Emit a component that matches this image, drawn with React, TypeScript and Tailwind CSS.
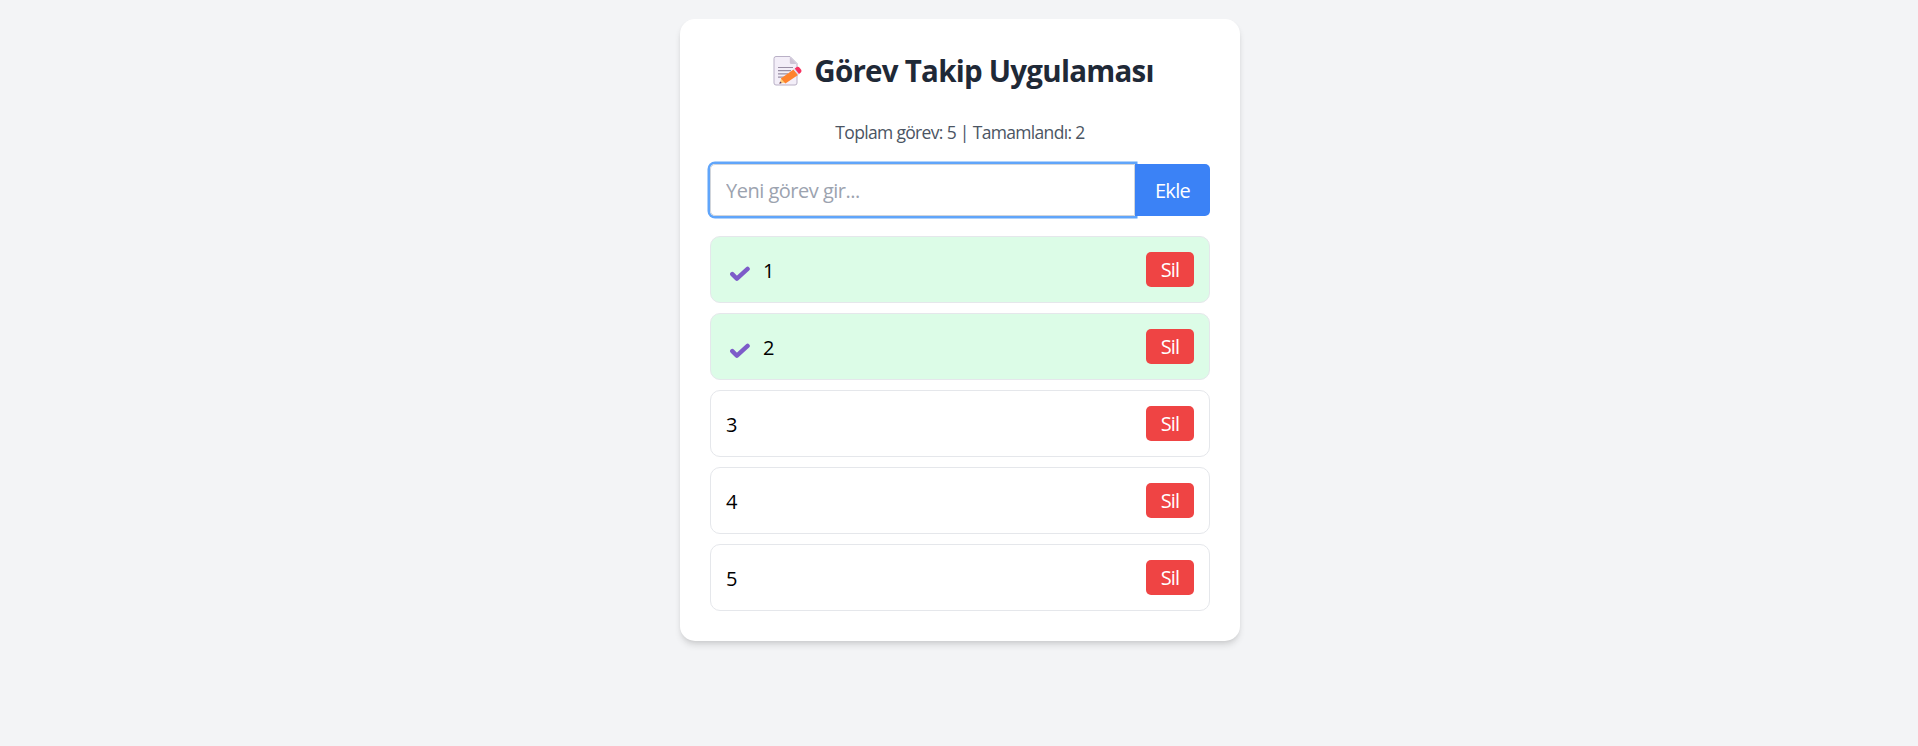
import { useState } from "react";

type Task = { id: number; text: string; done: boolean };

const initialTasks: Task[] = [
  { id: 1, text: "1", done: true },
  { id: 2, text: "2", done: true },
  { id: 3, text: "3", done: false },
  { id: 4, text: "4", done: false },
  { id: 5, text: "5", done: false },
];

function MemoIcon() {
  return (
    <svg viewBox="0 0 30 32" className="ml-[7px] h-8 w-[30px] shrink-0" aria-hidden="true">
      <path d="M3 1.500h14l7 7v19.500a2 2 0 0 1-2 2H3a2 2 0 0 1-2-2V3.500a2 2 0 0 1 2-2z" fill="#f3eef8" stroke="#b9b0c6" strokeWidth="1" />
      <path d="M16.800 2l6.800 7h-5.300a1.500 1.500 0 0 1-1.500-1.500z" fill="#cdc4d6" />
      <path d="M5 12.500h15M5 15.700h13M5 18.900h10M5 22.100h7" stroke="#998ea4" strokeWidth="1.200" />
      <path d="M6.500 28.600l2-6 4.300 5z" fill="#ffce7c" />
      <path d="M6.300 28.700l.8-2.300 1.700 1.500z" fill="#533566" />
      <path d="M7.900 23.500L20.500 14.400l4.500 5.600L12.400 28.600z" fill="#ff822d" />
      <path d="M20.500 14.400l1.500-1 4.400 5.500-1.400 1.100z" fill="#e5dcec" />
      <path d="M21.700 13.500l1.800-1.300c1-.7 2.300-.5 3.100.5l1.400 1.900c.8 1 .6 2.300-.4 3.100l-1.600 1.200z" fill="#f8315f" />
    </svg>
  );
}

function CheckIcon() {
  return (
    <svg viewBox="0 0 20 16" className="mt-[6px] h-4 w-5 shrink-0" aria-hidden="true">
      <path d="M2.300 8.100l4.600 4.600L17.600 2.900" fill="none" stroke="#7d5bc9" strokeWidth="4.400" strokeLinecap="round" strokeLinejoin="round" />
    </svg>
  );
}

export default function App() {
  const [tasks, setTasks] = useState(initialTasks);
  const [draft, setDraft] = useState("");
  const completed = tasks.filter((t) => t.done).length;

  const add = () => {
    if (!draft.trim()) return;
    setTasks([...tasks, { id: Date.now(), text: draft, done: false }]);
    setDraft("");
  };

  return (
    <div className="min-h-screen bg-gray-100 pt-[19px] pl-[2px] font-['Open_Sans','Noto_Sans',sans-serif] text-xl leading-[30px] text-black">
      <main className="mx-auto w-[560px] rounded-[15px] bg-white p-[30px] shadow-[0_5px_7px_-1px_rgba(0,0,0,0.12),0_2px_5px_-2px_rgba(0,0,0,0.1)]">
        <h1 className="-mt-px flex h-[45px] items-center justify-center gap-[11px] text-[29.5px] font-bold tracking-[-0.75px] text-[#1f2937]">
          <MemoIcon />
          Görev Takip Uygulaması
        </h1>
        <p className="mt-[27px] h-[25px] text-center text-[17.5px] leading-[25px] tracking-[-0.67px] text-[#4b5563]">
          Toplam görev: {tasks.length} | Tamamlandı: {completed}
        </p>
        <div className="mt-[19px] flex h-[52px]">
          <input
            value={draft}
            onChange={(e) => setDraft(e.target.value)}
            placeholder="Yeni görev gir..."
            className="w-[425px] rounded-l-[5px] border border-[#d1d5db] px-[15px] pt-[2px] tracking-[-0.5px] ring-[2.5px] ring-[#60a5fa] outline-none placeholder:text-[#9ca3af]"
          />
          <button onClick={add} className="z-10 w-[75px] rounded-r-[5px] bg-[#3b82f6] pt-[2px] tracking-[-0.7px] text-white">
            Ekle
          </button>
        </div>
        <ul className="mt-5 flex flex-col gap-[10px]">
          {tasks.map((task) => (
            <li
              key={task.id}
              className={`flex h-[67px] items-center justify-between rounded-[10px] border border-[#e5e7eb] px-[15px] ${task.done ? "bg-[#dcfce7]" : "bg-white"}`}
            >
              <span
                className="flex cursor-pointer items-center pt-[2px]"
                onClick={() => setTasks(tasks.map((t) => (t.id === task.id ? { ...t, done: !t.done } : t)))}
              >
                {task.done && (
                  <span className="mr-[13px] ml-[4px]">
                    <CheckIcon />
                  </span>
                )}
                {task.text}
              </span>
              <button
                onClick={() => setTasks(tasks.filter((t) => t.id !== task.id))}
                className="mb-[1px] h-[35px] w-12 rounded-[5px] bg-[#ef4444] pt-[2px] tracking-[-0.8px] text-white"
              >
                Sil
              </button>
            </li>
          ))}
        </ul>
      </main>
    </div>
  );
}
